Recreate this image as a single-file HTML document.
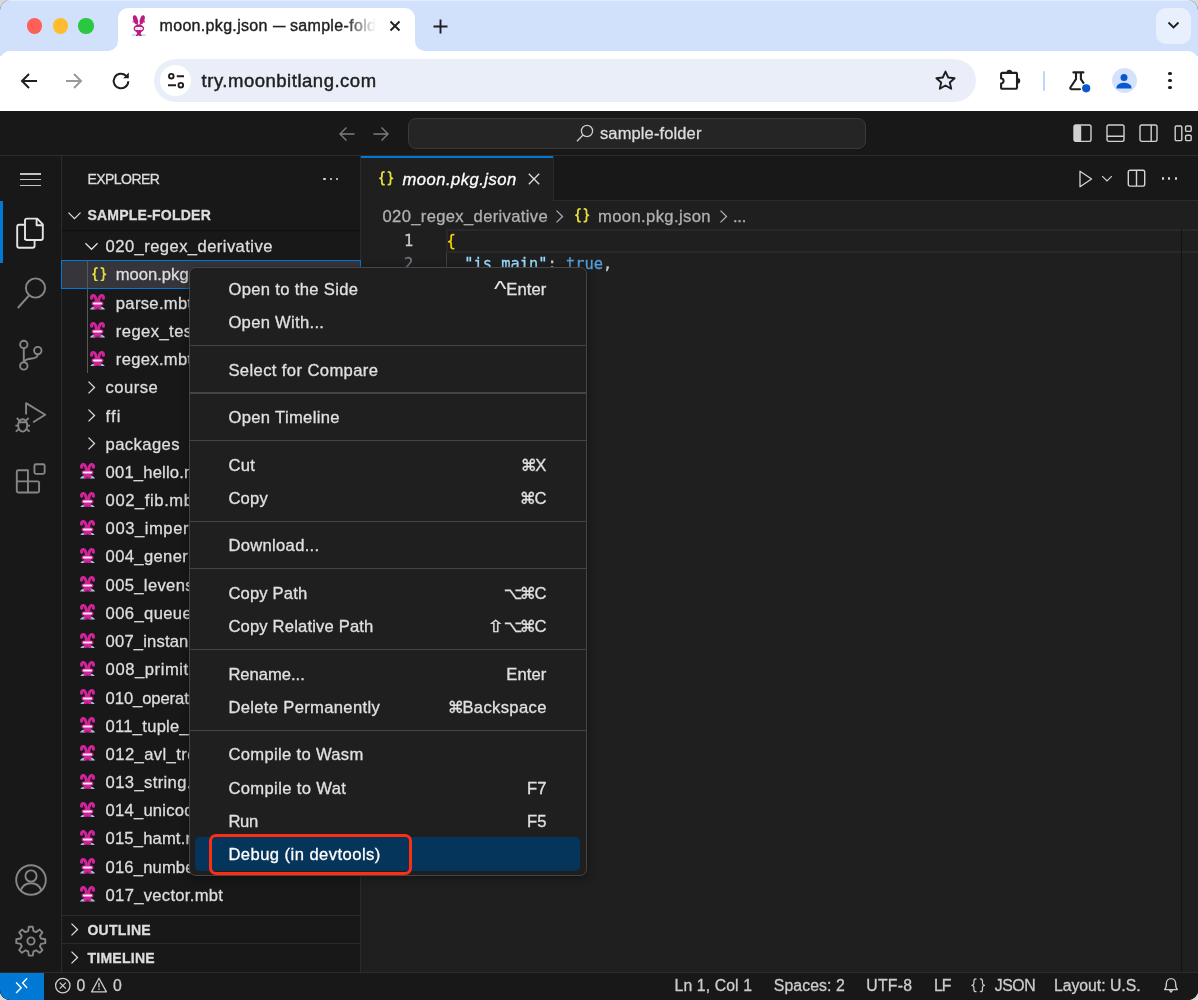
<!DOCTYPE html>
<html lang="en"><head><meta charset="utf-8"><title>moon.pkg.json — sample-folder</title>
<style>
html,body{margin:0;padding:0;}
body{width:1198px;height:1000px;overflow:hidden;background:#d9d9d9;font-family:"Liberation Sans",sans-serif;}
#win{will-change:transform;position:absolute;left:0;top:0;width:1198px;height:1000px;overflow:hidden;border-radius:10px;background:#181818;}
.b{position:absolute;display:block;}
.t{-webkit-text-stroke:0.3px;position:absolute;white-space:pre;line-height:20px;height:20px;font-family:"Liberation Sans",sans-serif;}
.sym{display:inline-block;font-family:"DejaVu Sans",sans-serif;font-size:16.2px;text-align:center;letter-spacing:0;line-height:20px;vertical-align:baseline;}
</style></head><body><div id="win">
<div class="b" style="left:0px;top:0px;width:1198px;height:64px;background:#d1e1fc;"></div>
<div class="b" style="left:0px;top:0px;width:1198px;height:1px;background:#e3edfe;"></div>
<div class="b" style="left:26.9px;top:18.4px;width:15.2px;height:15.2px;background:#fe5f57;border-radius:50%;"></div>
<div class="b" style="left:52.6px;top:18.4px;width:15.2px;height:15.2px;background:#febc2e;border-radius:50%;"></div>
<div class="b" style="left:78.4px;top:18.4px;width:15.2px;height:15.2px;background:#28c840;border-radius:50%;"></div>
<div class="b" style="left:118px;top:7.5px;width:297px;height:44px;background:#ffffff;border-radius:10px 10px 0 0;"></div>
<svg class="b" style="left:108px;top:41px;" width="10" height="10" viewBox="0 0 10 10"><path d="M10 0 V10 H0 A10 10 0 0 0 10 0Z" fill="#fff"/></svg>
<svg class="b" style="left:415px;top:41px;" width="10" height="10" viewBox="0 0 10 10"><path d="M0 0 V10 H10 A10 10 0 0 1 0 0Z" fill="#fff"/></svg>
<div class="b" style="left:0px;top:51px;width:1198px;height:60.6px;background:#ffffff;border-radius:10px 10px 0 0;"></div>
<div class="b" style="left:0px;top:56px;width:1198px;height:55.6px;background:#ffffff;"></div>
<svg class="b" style="left:131.9px;top:14.8px;" width="13.7" height="21.3" viewBox="0 0 13.7 21.3"><g fill="#bd1a82"><ellipse cx="3.500" cy="4.700" rx="2.250" ry="4.700" transform="rotate(-17 3.500 4.700)"/><ellipse cx="10.200" cy="4.700" rx="2.250" ry="4.700" transform="rotate(17 10.200 4.700)"/><path d="M2.600 7.500l4.250 3.600 4.250-3.600-.400-3-3.850 6-3.850-6z"/><path d="M1 5.200l-.500 2 1.500.400zM12.700 5.200l.500 2-1.500.400z"/><ellipse cx="6.850" cy="13.500" rx="5.300" ry="3.900"/><path d="M4.300 16.600h5.100l-1 2 1.500 2.300-2 .400-1.050-1.500-1.050 1.500-2-.400 1.500-2.300z"/></g><ellipse cx="2.300" cy="20.100" rx="2.500" ry="1.200" fill="#c3dcf3"/><ellipse cx="11.400" cy="20.100" rx="2.500" ry="1.200" fill="#c3dcf3"/><path d="M4.300 16.600h5.100l-1 2 1.500 2.300-2 .400-1.050-1.500-1.050 1.500-2-.400 1.500-2.300z" fill="#bd1a82"/><rect x="2.900" y="11.900" width="7.900" height="3.100" rx="1.550" fill="#fff"/><circle cx="5.300" cy="13.500" r=".700" fill="#e9a6d2"/><circle cx="8.400" cy="13.500" r=".700" fill="#e9a6d2"/></svg>
<span class="t" style="left:159.5px;top:15.50px;font-size:16px;color:#1f1f1f;-webkit-text-stroke:0.4px;width:218px;overflow:hidden;letter-spacing:0.326px;-webkit-mask-image:linear-gradient(90deg,#000 85%,transparent 99%);mask-image:linear-gradient(90deg,#000 85%,transparent 99%);">moon.pkg.json <span style="display:inline-block;width:12.6px;transform:scaleX(.78);transform-origin:0 50%;letter-spacing:0">—</span> sample-fold</span>
<svg class="b" style="left:388px;top:19px;" width="14" height="14" viewBox="0 0 14 14"><path d="M2.5 2.5l9 9M11.5 2.5l-9 9" stroke="#1f1f1f" stroke-width="1.9" fill="none"/></svg>
<svg class="b" style="left:432px;top:17.5px;" width="17" height="17" viewBox="0 0 17 17"><path d="M8.5 1.5v14M1.5 8.5h14" stroke="#1f1f1f" stroke-width="1.9" fill="none"/></svg>
<div class="b" style="left:1156px;top:7.5px;width:35px;height:36px;background:#e8f0fd;border-radius:10px;"></div>
<svg class="b" style="left:1166.5px;top:20px;" width="13" height="10" viewBox="0 0 13 10"><path d="M1.5 2.5l5 5 5-5" stroke="#1f1f1f" stroke-width="1.9" fill="none"/></svg>
<svg class="b" style="left:18px;top:70px;" width="22" height="22" viewBox="0 0 22 22"><path d="M19 11H4.5M11 4l-7 7 7 7" stroke="#1f1f1f" stroke-width="2" fill="none"/></svg>
<svg class="b" style="left:63px;top:70px;" width="22" height="22" viewBox="0 0 22 22"><path d="M3 11h14.5M11 4l7 7-7 7" stroke="#9a9a9a" stroke-width="2" fill="none"/></svg>
<svg class="b" style="left:109px;top:69px;" width="24" height="24" viewBox="0 0 24 24"><path d="M19.3 12.2a7.3 7.3 0 1 1-2.3-5.5" stroke="#1f1f1f" stroke-width="2" fill="none"/><path d="M19.8 3.6v5.6h-5.6z" fill="#1f1f1f"/></svg>
<div class="b" style="left:154px;top:59px;width:822px;height:43px;background:#e9eef9;border-radius:21.5px;"></div>
<div class="b" style="left:159.5px;top:64.7px;width:31.6px;height:31.6px;background:#ffffff;border-radius:50%;"></div>
<svg class="b" style="left:165.5px;top:71px;" width="20" height="20" viewBox="0 0 20 20"><g stroke="#1f1f1f" stroke-width="1.9" fill="none"><circle cx="5.3" cy="5.2" r="2.3"/><path d="M10.8 5.2H18"/><path d="M2 14.2h8"/><circle cx="14.8" cy="14.2" r="2.3"/></g></svg>
<span class="t" style="top:70.50px;font-size:18.5px;color:#1f1f1f;left:201.60px;letter-spacing:0.516px;-webkit-text-stroke:0.45px;">try.moonbitlang.com</span>
<svg class="b" style="left:933.5px;top:68.5px;" width="23" height="23" viewBox="0 0 23 23"><path d="M11.5 2.6l2.7 5.9 6.4.7-4.8 4.3 1.4 6.3-5.7-3.3-5.7 3.3 1.4-6.3L2.4 9.2l6.4-.7z" stroke="#1f1f1f" stroke-width="1.9" fill="none" stroke-linejoin="round"/></svg>
<svg class="b" style="left:999px;top:68px;" width="24" height="24" viewBox="0 0 24 24"><path d="M2.100 5.900a1 1 0 0 1 1-1H17a1 1 0 0 1 1 1v13.900a1 1 0 0 1-1 1H3.100a1 1 0 0 1-1-1v-4.300a2.500 2.500 0 0 0 0-5z" stroke="#1f1f1f" stroke-width="2.100" fill="none" stroke-linejoin="round"/><path d="M7.500 4.600a2.800 2.800 0 0 1 5.600 0zM18.400 10a2.850 2.850 0 0 1 0 5.700z" fill="#1f1f1f"/></svg>
<div class="b" style="left:1042.6px;top:70.6px;width:2.4px;height:20.2px;background:#c0d5fb;border-radius:1.200px;"></div>
<svg class="b" style="left:1066px;top:68px;" width="26" height="26" viewBox="0 0 26 26"><path d="M7.400 4.400h10M10 4.400v6.800L4.400 19.500a1.100 1.100 0 0 0 .900 1.700H14M14.900 4.400v6.800l2.700 4" stroke="#1f1f1f" stroke-width="2.100" fill="none" stroke-linejoin="round" stroke-linecap="round"/><circle cx="20.200" cy="20.300" r="5.200" fill="#fff"/><circle cx="20.200" cy="20.300" r="4.100" fill="#0b57d0"/></svg>
<div class="b" style="left:1111.8px;top:68px;width:25px;height:25px;background:#d3e3fd;border-radius:50%;"></div>
<svg class="b" style="left:1115.3px;top:71.5px;" width="18" height="18" viewBox="0 0 18 18"><circle cx="9" cy="5.6" r="3.5" fill="#0b57d0"/><path d="M1.6 15.2c0-3.3 4.9-4.5 7.4-4.5s7.4 1.2 7.4 4.5v1.2H1.6z" fill="#0b57d0"/></svg>
<div class="b" style="left:1168.4px;top:71.9px;width:3.4px;height:3.4px;background:#1f1f1f;border-radius:50%;"></div>
<div class="b" style="left:1168.4px;top:78.9px;width:3.4px;height:3.4px;background:#1f1f1f;border-radius:50%;"></div>
<div class="b" style="left:1168.4px;top:85.9px;width:3.4px;height:3.4px;background:#1f1f1f;border-radius:50%;"></div>
<div class="b" style="left:0px;top:111px;width:1198px;height:889px;background:#181818;"></div>
<div class="b" style="left:361px;top:156px;width:837px;height:816px;background:#1f1f1f;"></div>
<div class="b" style="left:0px;top:155px;width:1198px;height:1px;background:#2b2b2b;"></div>
<div class="b" style="left:60.5px;top:156px;width:1px;height:816px;background:#2b2b2b;"></div>
<div class="b" style="left:360px;top:156px;width:1px;height:816px;background:#2b2b2b;"></div>
<div class="b" style="left:361px;top:156px;width:837px;height:44.5px;background:#181818;"></div>
<div class="b" style="left:361px;top:200px;width:837px;height:1px;background:#2b2b2b;"></div>
<div class="b" style="left:361px;top:156px;width:191.5px;height:45px;background:#1f1f1f;"></div>
<div class="b" style="left:552.5px;top:156px;width:1px;height:44.5px;background:#2b2b2b;"></div>
<div class="b" style="left:361px;top:156px;width:191.5px;height:1.6px;background:#0078d4;"></div>
<div class="b" style="left:0px;top:972px;width:1198px;height:28px;background:#181818;"></div>
<div class="b" style="left:0px;top:971.8px;width:1198px;height:1.3px;background:#2b2b2b;"></div>
<div class="b" style="left:0px;top:973.1px;width:43.6px;height:27px;background:#0078d4;"></div>
<svg class="b" style="left:337px;top:124px;" width="20" height="20" viewBox="0 0 20 20"><path d="M17.5 10H3M9.5 3.5L3 10l6.5 6.5" stroke="#7d7d7d" stroke-width="1.4" fill="none"/></svg>
<svg class="b" style="left:370.5px;top:124px;" width="20" height="20" viewBox="0 0 20 20"><path d="M2.5 10H17M10.5 3.5L17 10l-6.5 6.5" stroke="#7d7d7d" stroke-width="1.4" fill="none"/></svg>
<div class="b" style="left:408px;top:118px;width:457.5px;height:30.8px;background:#252526;border-radius:8px;border:1px solid #3a3a3a;box-sizing:border-box;"></div>
<svg class="b" style="left:575px;top:123px;" width="20" height="20" viewBox="0 0 20 20"><circle cx="12" cy="8" r="5.6" stroke="#cccccc" stroke-width="1.3" fill="none"/><path d="M8 12L2 18.3" stroke="#cccccc" stroke-width="1.3"/></svg>
<span class="t" style="top:123.00px;font-size:16.5px;color:#dcdcdc;left:600.00px;letter-spacing:0.118px;">sample-folder</span>
<svg class="b" style="left:1072.5px;top:124px;" width="19" height="19" viewBox="0 0 19 19"><rect x="1" y="1" width="17" height="16.4" rx="1.8" stroke="#d0d0d0" stroke-width="1.4" fill="none"/><rect x="1" y="1" width="7.2" height="16.4" rx="1.5" fill="#d0d0d0"/></svg>
<svg class="b" style="left:1106px;top:124px;" width="19" height="19" viewBox="0 0 19 19"><rect x="1" y="1" width="17" height="16.4" rx="1.8" stroke="#d0d0d0" stroke-width="1.4" fill="none"/><path d="M1 12.3h17" stroke="#d0d0d0" stroke-width="1.4"/></svg>
<svg class="b" style="left:1139.3px;top:124px;" width="19" height="19" viewBox="0 0 19 19"><rect x="1" y="1" width="17" height="16.4" rx="1.8" stroke="#d0d0d0" stroke-width="1.4" fill="none"/><path d="M12.200 1v16.400" stroke="#d0d0d0" stroke-width="1.400"/></svg>
<svg class="b" style="left:1173.5px;top:124px;" width="19" height="19" viewBox="0 0 19 19"><rect x="1.2" y="2" width="6.6" height="14.6" rx="1.2" stroke="#d0d0d0" stroke-width="1.4" fill="none"/><rect x="11.6" y="2" width="5.6" height="5.4" rx="1.2" stroke="#d0d0d0" stroke-width="1.4" fill="none"/><rect x="11.6" y="11.2" width="5.6" height="5.4" rx="1.2" stroke="#d0d0d0" stroke-width="1.4" fill="none"/></svg>
<div class="b" style="left:0px;top:201px;width:2.8px;height:61.5px;background:#0078d4;"></div>
<div class="b" style="left:20px;top:173.35px;width:21.3px;height:1.3px;background:#c4c4c4;"></div>
<div class="b" style="left:20px;top:178.95px;width:21.3px;height:1.3px;background:#c4c4c4;"></div>
<div class="b" style="left:20px;top:184.54999999999998px;width:21.3px;height:1.3px;background:#c4c4c4;"></div>
<svg class="b" style="left:14px;top:214px;" width="34" height="37" viewBox="0 0 34 37"><g stroke="#e4e4e4" stroke-width="1.9" fill="none" stroke-linejoin="round"><path d="M11 26V6.6a2 2 0 0 1 2-2h10.2l5.6 5.8V24a2 2 0 0 1-2 2H13a2 2 0 0 1-2-2"/><path d="M22.6 4.8v6.4h6"/><path d="M10.8 10.8H5.2a2 2 0 0 0-2 2v19a2 2 0 0 0 2 2h13.4a2 2 0 0 0 2-2v-5.6"/></g></svg>
<svg class="b" style="left:14px;top:274px;" width="36" height="40" viewBox="0 0 36 40"><circle cx="21.5" cy="14" r="9.6" stroke="#868686" stroke-width="1.9" fill="none"/><path d="M15 21.5L3.8 34" stroke="#868686" stroke-width="1.9"/></svg>
<svg class="b" style="left:14px;top:336px;" width="36" height="38" viewBox="0 0 36 38"><g stroke="#868686" stroke-width="1.9" fill="none"><circle cx="9.8" cy="8.5" r="3.7"/><circle cx="23.8" cy="14.6" r="3.7"/><circle cx="9.8" cy="29.9" r="3.7"/><path d="M9.800 12.200v14"/><path d="M23.800 18.300c0 3.200-2.400 3.900-5.800 4.200-3.600.300-7.400.600-8.200 3.700"/></g></svg>
<svg class="b" style="left:13px;top:399px;" width="36" height="36" viewBox="0 0 36 36"><g stroke="#868686" stroke-width="1.9" fill="none" stroke-linejoin="round"><path d="M13.100 15.600V4.100L32.200 15.700 20.100 23.300"/><ellipse cx="9.700" cy="26.400" rx="4.500" ry="6.200"/><path d="M5.600 23.300h8.200M5.200 26.600H2.400M5.600 30.200l-2.800 2.400M14.200 26.600h2.800M13.800 30.200l2.800 2.400M6.400 21.600l-2.600-2.600M13 21.600l2.600-2.600"/></g></svg>
<svg class="b" style="left:13px;top:461px;" width="36" height="36" viewBox="0 0 36 36"><g stroke="#868686" stroke-width="1.9" fill="none" stroke-linejoin="round"><path d="M14.950 9.200H5.300a1.500 1.500 0 0 0-1.500 1.500V30a1.500 1.500 0 0 0 1.500 1.500h19.300a1.500 1.500 0 0 0 1.500-1.500v-8.150a1.500 1.500 0 0 0-1.500-1.500H14.950zM14.950 20.350V31.500M3.800 20.350h11.150"/><rect x="21.450" y="3.250" width="10.200" height="9.600" rx="1.500"/></g></svg>
<svg class="b" style="left:14px;top:862.5px;" width="34" height="34" viewBox="0 0 34 34"><g stroke="#868686" stroke-width="1.9" fill="none"><circle cx="17" cy="17" r="14.8"/><circle cx="17" cy="13" r="5.6"/><path d="M6.8 27.6c1.6-5.4 5.8-7.4 10.2-7.4s8.600 2 10.2 7.400"/></g></svg>
<svg class="b" style="left:13px;top:923px;" width="36" height="36" viewBox="0 0 36 36"><g stroke="#868686" stroke-width="1.9" fill="none" stroke-linejoin="round"><path d="M32.27 16.26 L32.27 20.14 L27.95 20.89 L26.88 23.47 L29.41 27.06 L26.66 29.81 L23.07 27.28 L20.49 28.35 L19.74 32.67 L15.86 32.67 L15.11 28.35 L12.53 27.28 L8.94 29.81 L6.19 27.06 L8.72 23.47 L7.65 20.89 L3.33 20.14 L3.33 16.26 L7.65 15.51 L8.72 12.93 L6.19 9.34 L8.94 6.59 L12.53 9.12 L15.11 8.05 L15.86 3.73 L19.74 3.73 L20.49 8.05 L23.07 9.12 L26.66 6.59 L29.41 9.34 L26.88 12.93 L27.95 15.51Z"/><circle cx="18" cy="18" r="3.6"/></g></svg>
<svg class="b" style="left:13px;top:977px;" width="18" height="18" viewBox="0 0 18 18"><path d="M3.100 5.500l5.100 5.300-5.100 5.300M14.100 1.300l-4.500 4.800 4.500 4.800" stroke="#fff" stroke-width="1.4" fill="none"/></svg>
<svg class="b" style="left:54px;top:976.9px;" width="18" height="18" viewBox="0 0 18 18"><circle cx="8.8" cy="8.6" r="7.2" stroke="#ccc" stroke-width="1.3" fill="none"/><path d="M5.8 5.6l6 6M11.8 5.6l-6 6" stroke="#ccc" stroke-width="1.3"/></svg>
<span class="t" style="top:975.50px;font-size:15.8px;color:#cccccc;left:76.50px;letter-spacing:-0.297px;">0</span>
<svg class="b" style="left:90.4px;top:976.3px;" width="18" height="18" viewBox="0 0 18 18"><path d="M9 2.200L16.400 15.900H1.600z" stroke="#ccc" stroke-width="1.3" fill="none" stroke-linejoin="round"/><path d="M9 6.8v4.6M9 12.6v1.4" stroke="#ccc" stroke-width="1.3"/></svg>
<span class="t" style="top:975.50px;font-size:15.8px;color:#cccccc;left:113.00px;letter-spacing:-0.297px;">0</span>
<span class="t" style="top:975.50px;font-size:15.8px;color:#cccccc;left:674.60px;letter-spacing:0.099px;">Ln 1, Col 1</span>
<span class="t" style="top:975.50px;font-size:15.8px;color:#cccccc;left:773.80px;letter-spacing:0.082px;">Spaces: 2</span>
<span class="t" style="top:975.50px;font-size:15.8px;color:#cccccc;left:866.20px;letter-spacing:0.287px;">UTF-8</span>
<span class="t" style="top:975.50px;font-size:15.8px;color:#cccccc;left:934.00px;letter-spacing:-0.919px;">LF</span>
<svg class="b" style="left:970.5px;top:978.4px;" width="14.4" height="14.6" viewBox="0 0 14.4 14.6"><g stroke="#cccccc" stroke-width="1.2" fill="none" stroke-linecap="round" stroke-linejoin="round"><path d="M5 .900C3.300.900 2.900 1.800 2.900 3.200V5.300C2.900 6.600 2.300 7.200.900 7.300 2.300 7.400 2.900 8 2.900 9.300v2.100c0 1.400.400 2.300 2.100 2.300"/><path d="M9.400.900c1.700 0 2.100.900 2.100 2.300v2.100c0 1.300.600 1.900 2 2-1.400.100-2 .700-2 2v2.100c0 1.400-.400 2.300-2.100 2.300"/></g></svg>
<span class="t" style="top:975.50px;font-size:15.8px;color:#cccccc;left:994.70px;letter-spacing:-0.385px;">JSON</span>
<span class="t" style="top:975.50px;font-size:15.8px;color:#cccccc;left:1054.00px;letter-spacing:-0.036px;">Layout: U.S.</span>
<svg class="b" style="left:1162px;top:975.8px;" width="18" height="19" viewBox="0 0 18 19"><path d="M2.6 13.6h12.8c-1.600-1.6-1.800-3-1.800-6.400a4.600 4.600 0 0 0-9.200 0c0 3.400-.2 4.800-1.800 6.400zM7.400 14l1.600 2.200 1.600-2.200" stroke="#ccc" stroke-width="1.3" fill="none" stroke-linejoin="round"/></svg>
<span class="t" style="top:169.00px;font-size:14px;color:#dddddd;left:87.40px;letter-spacing:-0.531px;">EXPLORER</span>
<div class="b" style="left:323.4px;top:177.6px;width:2.2px;height:2.2px;background:#dddddd;border-radius:50%;"></div>
<div class="b" style="left:329.7px;top:177.6px;width:2.2px;height:2.2px;background:#dddddd;border-radius:50%;"></div>
<div class="b" style="left:336.0px;top:177.6px;width:2.2px;height:2.2px;background:#dddddd;border-radius:50%;"></div>
<svg class="b" style="left:67px;top:209px;" width="15" height="14" viewBox="0 0 15 14"><path d="M1.5 3.6l6 6 6-6" stroke="#dddddd" stroke-width="1.3" fill="none"/></svg>
<span class="t" style="top:205.00px;font-size:14px;color:#dddddd;left:87.40px;letter-spacing:0.234px;font-weight:700;">SAMPLE-FOLDER</span>
<div class="b" style="left:62px;top:229.5px;width:298px;height:2.5px;background:linear-gradient(#0c0c0c,rgba(24,24,24,0));"></div>
<div class="b" style="left:61.4px;top:259.8px;width:299.2px;height:29.099999999999998px;background:#35353b;box-sizing:border-box;border:1.600px solid #0078d4;"></div>
<div class="b" style="left:87.2px;top:260.2px;width:1.3px;height:112.8px;background:#585858;"></div>
<svg class="b" style="left:84px;top:242.0px;" width="15" height="9" viewBox="0 0 15 9"><path d="M1.400 1.200l6.100 6.100 6.100-6.100" stroke="#dddddd" stroke-width="1.3" fill="none"/></svg>
<span class="t" style="top:236.50px;font-size:16.6px;color:#dddddd;left:105.60px;letter-spacing:0.426px;max-width:249px;overflow:hidden;">020_regex_derivative</span>
<svg class="b" style="left:92.3px;top:266.8px;" width="14.4" height="14.6" viewBox="0 0 14.4 14.6"><g stroke="#e2dc3c" stroke-width="1.8" fill="none" stroke-linecap="round" stroke-linejoin="round"><path d="M5 .900C3.300.900 2.900 1.800 2.900 3.200V5.300C2.900 6.600 2.300 7.200.900 7.300 2.300 7.400 2.900 8 2.900 9.300v2.100c0 1.400.400 2.300 2.100 2.300"/><path d="M9.400.900c1.700 0 2.100.900 2.100 2.300v2.100c0 1.300.600 1.900 2 2-1.400.100-2 .700-2 2v2.100c0 1.400-.400 2.300-2.100 2.300"/></g></svg>
<span class="t" style="top:264.50px;font-size:16.6px;color:#dddddd;left:115.80px;letter-spacing:-0.009px;max-width:239px;overflow:hidden;">moon.pkg.json</span>
<svg class="b" style="left:90px;top:294.09999999999997px;" width="15" height="15.6" viewBox="0 0 15 15.6"><g stroke="#d12399" stroke-width="3.1" fill="none" stroke-linecap="round"><path d="M6.500 8C6.100 4.600 5.200 1.700 3.500 1.500 2 1.400 1.300 2.900 1.600 4.300"/><path d="M8.500 8C8.900 4.600 9.800 1.700 11.500 1.500 13 1.400 13.700 2.900 13.400 4.300"/></g><path d="M0 15.600c.800-1.900 2.500-3 4.600-3.100l.600 3.100zM15 15.600c-.800-1.900-2.500-3-4.600-3.100l-.600 3.100z" fill="#a9c7dc"/><path d="M3.300 7.400h8.400c1.100 0 1.800.900 1.800 2.100s-.700 2.100-1.800 2.100h-.900l.700 3.800H3.500l.700-3.800h-.900c-1.100 0-1.800-.900-1.800-2.100s.700-2.100 1.800-2.100z" fill="#d12399"/><rect x="2.900" y="8.500" width="9.200" height="2.100" rx="1.050" fill="#fdeaf6"/><path d="M5.200 15.400l2.300-2 2.300 2z" fill="#181818" opacity=".35"/></svg>
<span class="t" style="top:293.50px;font-size:16.6px;color:#dddddd;left:115.80px;letter-spacing:0.323px;max-width:239px;overflow:hidden;">parse.mbt</span>
<svg class="b" style="left:90px;top:322.3px;" width="15" height="15.6" viewBox="0 0 15 15.6"><g stroke="#d12399" stroke-width="3.1" fill="none" stroke-linecap="round"><path d="M6.500 8C6.100 4.600 5.200 1.700 3.500 1.500 2 1.400 1.300 2.900 1.600 4.300"/><path d="M8.500 8C8.900 4.600 9.800 1.700 11.500 1.500 13 1.400 13.700 2.900 13.400 4.300"/></g><path d="M0 15.600c.800-1.900 2.500-3 4.600-3.100l.600 3.100zM15 15.600c-.800-1.900-2.500-3-4.600-3.100l-.600 3.100z" fill="#a9c7dc"/><path d="M3.300 7.400h8.400c1.100 0 1.800.900 1.800 2.100s-.700 2.100-1.800 2.100h-.900l.700 3.800H3.500l.700-3.800h-.900c-1.100 0-1.800-.900-1.800-2.100s.700-2.100 1.800-2.100z" fill="#d12399"/><rect x="2.900" y="8.500" width="9.200" height="2.100" rx="1.050" fill="#fdeaf6"/><path d="M5.200 15.400l2.300-2 2.300 2z" fill="#181818" opacity=".35"/></svg>
<span class="t" style="top:321.50px;font-size:16.6px;color:#dddddd;left:115.80px;letter-spacing:0.428px;max-width:239px;overflow:hidden;">regex_test.mbt</span>
<svg class="b" style="left:90px;top:350.5px;" width="15" height="15.6" viewBox="0 0 15 15.6"><g stroke="#d12399" stroke-width="3.1" fill="none" stroke-linecap="round"><path d="M6.500 8C6.100 4.600 5.200 1.700 3.500 1.500 2 1.400 1.300 2.900 1.600 4.300"/><path d="M8.500 8C8.900 4.600 9.800 1.700 11.500 1.500 13 1.400 13.700 2.900 13.400 4.300"/></g><path d="M0 15.600c.800-1.900 2.500-3 4.600-3.100l.600 3.100zM15 15.600c-.800-1.900-2.500-3-4.600-3.100l-.600 3.100z" fill="#a9c7dc"/><path d="M3.300 7.400h8.400c1.100 0 1.800.900 1.800 2.100s-.700 2.100-1.800 2.100h-.900l.700 3.800H3.500l.700-3.800h-.900c-1.100 0-1.800-.900-1.800-2.100s.700-2.100 1.800-2.100z" fill="#d12399"/><rect x="2.900" y="8.500" width="9.200" height="2.100" rx="1.050" fill="#fdeaf6"/><path d="M5.200 15.400l2.300-2 2.300 2z" fill="#181818" opacity=".35"/></svg>
<span class="t" style="top:349.50px;font-size:16.6px;color:#dddddd;left:115.80px;letter-spacing:0.323px;max-width:239px;overflow:hidden;">regex.mbt</span>
<svg class="b" style="left:86.7px;top:380.0px;" width="9" height="15" viewBox="0 0 9 15"><path d="M1.500 1.600l6 5.900-6 5.900" stroke="#dddddd" stroke-width="1.3" fill="none"/></svg>
<span class="t" style="top:377.50px;font-size:16.6px;color:#dddddd;left:105.60px;letter-spacing:0.448px;max-width:249px;overflow:hidden;">course</span>
<svg class="b" style="left:86.7px;top:408.2px;" width="9" height="15" viewBox="0 0 9 15"><path d="M1.500 1.600l6 5.900-6 5.900" stroke="#dddddd" stroke-width="1.3" fill="none"/></svg>
<span class="t" style="top:406.50px;font-size:16.6px;color:#dddddd;left:105.60px;letter-spacing:1.097px;max-width:249px;overflow:hidden;">ffi</span>
<svg class="b" style="left:86.7px;top:436.4px;" width="9" height="15" viewBox="0 0 9 15"><path d="M1.500 1.600l6 5.900-6 5.900" stroke="#dddddd" stroke-width="1.3" fill="none"/></svg>
<span class="t" style="top:434.50px;font-size:16.6px;color:#dddddd;left:105.60px;letter-spacing:0.407px;max-width:249px;overflow:hidden;">packages</span>
<svg class="b" style="left:79.8px;top:463.3px;" width="15" height="15.6" viewBox="0 0 15 15.6"><g stroke="#d12399" stroke-width="3.1" fill="none" stroke-linecap="round"><path d="M6.500 8C6.100 4.600 5.200 1.700 3.500 1.500 2 1.400 1.300 2.900 1.600 4.300"/><path d="M8.500 8C8.900 4.600 9.800 1.700 11.500 1.500 13 1.400 13.700 2.900 13.400 4.300"/></g><path d="M0 15.600c.800-1.900 2.500-3 4.600-3.100l.600 3.100zM15 15.600c-.800-1.900-2.500-3-4.600-3.100l-.600 3.100z" fill="#a9c7dc"/><path d="M3.300 7.400h8.400c1.100 0 1.800.900 1.800 2.100s-.700 2.100-1.800 2.100h-.900l.700 3.800H3.500l.700-3.800h-.900c-1.100 0-1.800-.900-1.800-2.100s.700-2.100 1.800-2.100z" fill="#d12399"/><rect x="2.900" y="8.500" width="9.200" height="2.100" rx="1.050" fill="#fdeaf6"/><path d="M5.200 15.400l2.300-2 2.300 2z" fill="#181818" opacity=".35"/></svg>
<span class="t" style="top:462.50px;font-size:16.6px;color:#dddddd;left:105.60px;letter-spacing:0.179px;max-width:249px;overflow:hidden;">001_hello.mbt</span>
<svg class="b" style="left:79.8px;top:491.49999999999994px;" width="15" height="15.6" viewBox="0 0 15 15.6"><g stroke="#d12399" stroke-width="3.1" fill="none" stroke-linecap="round"><path d="M6.500 8C6.100 4.600 5.200 1.700 3.500 1.500 2 1.400 1.300 2.900 1.600 4.300"/><path d="M8.500 8C8.900 4.600 9.800 1.700 11.500 1.500 13 1.400 13.700 2.900 13.400 4.300"/></g><path d="M0 15.600c.800-1.900 2.500-3 4.600-3.100l.600 3.100zM15 15.600c-.800-1.900-2.500-3-4.600-3.100l-.600 3.100z" fill="#a9c7dc"/><path d="M3.300 7.400h8.400c1.100 0 1.800.900 1.800 2.100s-.700 2.100-1.800 2.100h-.900l.700 3.800H3.500l.700-3.800h-.900c-1.100 0-1.800-.900-1.800-2.100s.700-2.100 1.800-2.100z" fill="#d12399"/><rect x="2.900" y="8.500" width="9.200" height="2.100" rx="1.050" fill="#fdeaf6"/><path d="M5.200 15.400l2.300-2 2.300 2z" fill="#181818" opacity=".35"/></svg>
<span class="t" style="top:490.50px;font-size:16.6px;color:#dddddd;left:105.60px;letter-spacing:0.587px;max-width:249px;overflow:hidden;">002_fib.mbt</span>
<svg class="b" style="left:79.8px;top:519.7px;" width="15" height="15.6" viewBox="0 0 15 15.6"><g stroke="#d12399" stroke-width="3.1" fill="none" stroke-linecap="round"><path d="M6.500 8C6.100 4.600 5.200 1.700 3.500 1.500 2 1.400 1.300 2.900 1.600 4.300"/><path d="M8.500 8C8.900 4.600 9.800 1.700 11.500 1.500 13 1.400 13.700 2.900 13.400 4.300"/></g><path d="M0 15.600c.800-1.900 2.500-3 4.600-3.100l.600 3.100zM15 15.600c-.800-1.900-2.500-3-4.600-3.100l-.600 3.100z" fill="#a9c7dc"/><path d="M3.300 7.400h8.400c1.100 0 1.800.900 1.800 2.100s-.700 2.100-1.800 2.100h-.900l.700 3.800H3.500l.700-3.800h-.900c-1.100 0-1.800-.900-1.800-2.100s.700-2.100 1.800-2.100z" fill="#d12399"/><rect x="2.900" y="8.500" width="9.200" height="2.100" rx="1.050" fill="#fdeaf6"/><path d="M5.200 15.400l2.300-2 2.300 2z" fill="#181818" opacity=".35"/></svg>
<span class="t" style="top:518.50px;font-size:16.6px;color:#dddddd;left:105.60px;letter-spacing:0.555px;max-width:249px;overflow:hidden;">003_imperative.mbt</span>
<svg class="b" style="left:79.8px;top:547.9000000000001px;" width="15" height="15.6" viewBox="0 0 15 15.6"><g stroke="#d12399" stroke-width="3.1" fill="none" stroke-linecap="round"><path d="M6.500 8C6.100 4.600 5.200 1.700 3.500 1.500 2 1.400 1.300 2.900 1.600 4.300"/><path d="M8.500 8C8.900 4.600 9.800 1.700 11.500 1.500 13 1.400 13.700 2.900 13.400 4.300"/></g><path d="M0 15.600c.800-1.900 2.500-3 4.600-3.100l.600 3.100zM15 15.600c-.800-1.900-2.500-3-4.600-3.100l-.600 3.100z" fill="#a9c7dc"/><path d="M3.300 7.400h8.400c1.100 0 1.800.900 1.800 2.100s-.700 2.100-1.800 2.100h-.900l.700 3.800H3.500l.700-3.800h-.900c-1.100 0-1.800-.900-1.800-2.100s.700-2.100 1.800-2.100z" fill="#d12399"/><rect x="2.900" y="8.500" width="9.200" height="2.100" rx="1.050" fill="#fdeaf6"/><path d="M5.200 15.400l2.300-2 2.300 2z" fill="#181818" opacity=".35"/></svg>
<span class="t" style="top:546.50px;font-size:16.6px;color:#dddddd;left:105.60px;letter-spacing:0.357px;max-width:249px;overflow:hidden;">004_generics.mbt</span>
<svg class="b" style="left:79.8px;top:576.1px;" width="15" height="15.6" viewBox="0 0 15 15.6"><g stroke="#d12399" stroke-width="3.1" fill="none" stroke-linecap="round"><path d="M6.500 8C6.100 4.600 5.200 1.700 3.500 1.500 2 1.400 1.300 2.900 1.600 4.300"/><path d="M8.500 8C8.900 4.600 9.800 1.700 11.500 1.500 13 1.400 13.700 2.900 13.400 4.300"/></g><path d="M0 15.600c.800-1.900 2.500-3 4.600-3.100l.600 3.100zM15 15.600c-.800-1.900-2.500-3-4.600-3.100l-.600 3.100z" fill="#a9c7dc"/><path d="M3.300 7.400h8.400c1.100 0 1.800.900 1.800 2.100s-.700 2.100-1.800 2.100h-.900l.700 3.800H3.500l.700-3.800h-.900c-1.100 0-1.800-.900-1.800-2.100s.700-2.100 1.800-2.100z" fill="#d12399"/><rect x="2.900" y="8.500" width="9.200" height="2.100" rx="1.050" fill="#fdeaf6"/><path d="M5.200 15.400l2.300-2 2.300 2z" fill="#181818" opacity=".35"/></svg>
<span class="t" style="top:575.50px;font-size:16.6px;color:#dddddd;left:105.60px;letter-spacing:0.337px;max-width:249px;overflow:hidden;">005_levenshtein.mbt</span>
<svg class="b" style="left:79.8px;top:604.3px;" width="15" height="15.6" viewBox="0 0 15 15.6"><g stroke="#d12399" stroke-width="3.1" fill="none" stroke-linecap="round"><path d="M6.500 8C6.100 4.600 5.200 1.700 3.500 1.500 2 1.400 1.300 2.900 1.600 4.300"/><path d="M8.500 8C8.900 4.600 9.800 1.700 11.500 1.500 13 1.400 13.700 2.900 13.400 4.300"/></g><path d="M0 15.600c.800-1.900 2.500-3 4.600-3.100l.600 3.100zM15 15.600c-.800-1.900-2.500-3-4.600-3.100l-.600 3.100z" fill="#a9c7dc"/><path d="M3.300 7.400h8.400c1.100 0 1.800.900 1.800 2.100s-.700 2.100-1.800 2.100h-.900l.700 3.800H3.500l.700-3.800h-.900c-1.100 0-1.800-.900-1.800-2.100s.700-2.100 1.800-2.100z" fill="#d12399"/><rect x="2.900" y="8.500" width="9.200" height="2.100" rx="1.050" fill="#fdeaf6"/><path d="M5.200 15.400l2.300-2 2.300 2z" fill="#181818" opacity=".35"/></svg>
<span class="t" style="top:603.50px;font-size:16.6px;color:#dddddd;left:105.60px;letter-spacing:0.379px;max-width:249px;overflow:hidden;">006_queue.mbt</span>
<svg class="b" style="left:79.8px;top:632.5px;" width="15" height="15.6" viewBox="0 0 15 15.6"><g stroke="#d12399" stroke-width="3.1" fill="none" stroke-linecap="round"><path d="M6.500 8C6.100 4.600 5.200 1.700 3.500 1.500 2 1.400 1.300 2.900 1.600 4.300"/><path d="M8.500 8C8.900 4.600 9.800 1.700 11.500 1.500 13 1.400 13.700 2.900 13.400 4.300"/></g><path d="M0 15.600c.800-1.900 2.500-3 4.600-3.100l.600 3.100zM15 15.600c-.800-1.900-2.500-3-4.600-3.100l-.600 3.100z" fill="#a9c7dc"/><path d="M3.300 7.400h8.400c1.100 0 1.800.900 1.800 2.100s-.700 2.100-1.800 2.100h-.900l.700 3.800H3.500l.700-3.800h-.900c-1.100 0-1.800-.900-1.800-2.100s.700-2.100 1.800-2.100z" fill="#d12399"/><rect x="2.900" y="8.500" width="9.200" height="2.100" rx="1.050" fill="#fdeaf6"/><path d="M5.200 15.400l2.300-2 2.300 2z" fill="#181818" opacity=".35"/></svg>
<span class="t" style="top:631.50px;font-size:16.6px;color:#dddddd;left:105.60px;letter-spacing:0.171px;max-width:249px;overflow:hidden;">007_instance.mbt</span>
<svg class="b" style="left:79.8px;top:660.7px;" width="15" height="15.6" viewBox="0 0 15 15.6"><g stroke="#d12399" stroke-width="3.1" fill="none" stroke-linecap="round"><path d="M6.500 8C6.100 4.600 5.200 1.700 3.500 1.500 2 1.400 1.300 2.900 1.600 4.300"/><path d="M8.500 8C8.900 4.600 9.800 1.700 11.500 1.500 13 1.400 13.700 2.900 13.400 4.300"/></g><path d="M0 15.600c.800-1.900 2.500-3 4.600-3.100l.600 3.100zM15 15.600c-.800-1.900-2.500-3-4.600-3.100l-.600 3.100z" fill="#a9c7dc"/><path d="M3.300 7.400h8.400c1.100 0 1.800.900 1.800 2.100s-.700 2.100-1.800 2.100h-.900l.700 3.800H3.500l.700-3.800h-.900c-1.100 0-1.800-.900-1.800-2.100s.700-2.100 1.800-2.100z" fill="#d12399"/><rect x="2.900" y="8.500" width="9.200" height="2.100" rx="1.050" fill="#fdeaf6"/><path d="M5.200 15.400l2.300-2 2.300 2z" fill="#181818" opacity=".35"/></svg>
<span class="t" style="top:659.50px;font-size:16.6px;color:#dddddd;left:105.60px;letter-spacing:0.568px;max-width:249px;overflow:hidden;">008_primitive.mbt</span>
<svg class="b" style="left:79.8px;top:688.9000000000001px;" width="15" height="15.6" viewBox="0 0 15 15.6"><g stroke="#d12399" stroke-width="3.1" fill="none" stroke-linecap="round"><path d="M6.500 8C6.100 4.600 5.200 1.700 3.500 1.500 2 1.400 1.300 2.900 1.600 4.300"/><path d="M8.500 8C8.900 4.600 9.800 1.700 11.500 1.500 13 1.400 13.700 2.900 13.400 4.300"/></g><path d="M0 15.600c.800-1.900 2.500-3 4.600-3.100l.600 3.100zM15 15.600c-.800-1.900-2.500-3-4.600-3.100l-.600 3.100z" fill="#a9c7dc"/><path d="M3.300 7.400h8.400c1.100 0 1.800.900 1.800 2.100s-.700 2.100-1.800 2.100h-.900l.700 3.800H3.500l.700-3.800h-.900c-1.100 0-1.800-.900-1.800-2.100s.700-2.100 1.800-2.100z" fill="#d12399"/><rect x="2.900" y="8.500" width="9.200" height="2.100" rx="1.050" fill="#fdeaf6"/><path d="M5.200 15.400l2.300-2 2.300 2z" fill="#181818" opacity=".35"/></svg>
<span class="t" style="top:688.50px;font-size:16.6px;color:#dddddd;left:105.60px;letter-spacing:-0.088px;max-width:249px;overflow:hidden;">010_operator.mbt</span>
<svg class="b" style="left:79.8px;top:717.1px;" width="15" height="15.6" viewBox="0 0 15 15.6"><g stroke="#d12399" stroke-width="3.1" fill="none" stroke-linecap="round"><path d="M6.500 8C6.100 4.600 5.200 1.700 3.500 1.500 2 1.400 1.300 2.900 1.600 4.300"/><path d="M8.500 8C8.900 4.600 9.800 1.700 11.500 1.500 13 1.400 13.700 2.900 13.400 4.300"/></g><path d="M0 15.600c.800-1.900 2.500-3 4.600-3.100l.600 3.100zM15 15.600c-.800-1.900-2.500-3-4.600-3.100l-.600 3.100z" fill="#a9c7dc"/><path d="M3.300 7.400h8.400c1.100 0 1.800.900 1.800 2.100s-.700 2.100-1.800 2.100h-.900l.700 3.800H3.500l.700-3.800h-.900c-1.100 0-1.800-.900-1.800-2.100s.700-2.100 1.800-2.100z" fill="#d12399"/><rect x="2.900" y="8.500" width="9.200" height="2.100" rx="1.050" fill="#fdeaf6"/><path d="M5.200 15.400l2.300-2 2.300 2z" fill="#181818" opacity=".35"/></svg>
<span class="t" style="top:716.50px;font-size:16.6px;color:#dddddd;left:105.60px;letter-spacing:0.252px;max-width:249px;overflow:hidden;">011_tuple_accessor.mbt</span>
<svg class="b" style="left:79.8px;top:745.3px;" width="15" height="15.6" viewBox="0 0 15 15.6"><g stroke="#d12399" stroke-width="3.1" fill="none" stroke-linecap="round"><path d="M6.500 8C6.100 4.600 5.200 1.700 3.500 1.500 2 1.400 1.300 2.900 1.600 4.300"/><path d="M8.500 8C8.900 4.600 9.800 1.700 11.500 1.500 13 1.400 13.700 2.900 13.400 4.300"/></g><path d="M0 15.600c.800-1.900 2.500-3 4.600-3.100l.600 3.100zM15 15.600c-.800-1.900-2.500-3-4.600-3.100l-.600 3.100z" fill="#a9c7dc"/><path d="M3.300 7.400h8.400c1.100 0 1.800.900 1.800 2.100s-.700 2.100-1.800 2.100h-.900l.700 3.800H3.500l.700-3.800h-.900c-1.100 0-1.800-.900-1.800-2.100s.700-2.100 1.800-2.100z" fill="#d12399"/><rect x="2.900" y="8.500" width="9.200" height="2.100" rx="1.050" fill="#fdeaf6"/><path d="M5.200 15.400l2.300-2 2.300 2z" fill="#181818" opacity=".35"/></svg>
<span class="t" style="top:744.50px;font-size:16.6px;color:#dddddd;left:105.60px;letter-spacing:0.414px;max-width:249px;overflow:hidden;">012_avl_tree.mbt</span>
<svg class="b" style="left:79.8px;top:773.5px;" width="15" height="15.6" viewBox="0 0 15 15.6"><g stroke="#d12399" stroke-width="3.1" fill="none" stroke-linecap="round"><path d="M6.500 8C6.100 4.600 5.200 1.700 3.500 1.500 2 1.400 1.300 2.900 1.600 4.300"/><path d="M8.500 8C8.900 4.600 9.800 1.700 11.500 1.500 13 1.400 13.700 2.900 13.400 4.300"/></g><path d="M0 15.600c.800-1.900 2.500-3 4.600-3.100l.600 3.100zM15 15.600c-.800-1.900-2.500-3-4.600-3.100l-.600 3.100z" fill="#a9c7dc"/><path d="M3.300 7.400h8.400c1.100 0 1.800.900 1.800 2.100s-.700 2.100-1.800 2.100h-.900l.700 3.800H3.500l.700-3.800h-.900c-1.100 0-1.800-.900-1.800-2.100s.700-2.100 1.800-2.100z" fill="#d12399"/><rect x="2.900" y="8.500" width="9.200" height="2.100" rx="1.050" fill="#fdeaf6"/><path d="M5.200 15.400l2.300-2 2.300 2z" fill="#181818" opacity=".35"/></svg>
<span class="t" style="top:772.50px;font-size:16.6px;color:#dddddd;left:105.60px;letter-spacing:0.374px;max-width:249px;overflow:hidden;">013_string.mbt</span>
<svg class="b" style="left:79.8px;top:801.7px;" width="15" height="15.6" viewBox="0 0 15 15.6"><g stroke="#d12399" stroke-width="3.1" fill="none" stroke-linecap="round"><path d="M6.500 8C6.100 4.600 5.200 1.700 3.500 1.500 2 1.400 1.300 2.900 1.600 4.300"/><path d="M8.500 8C8.900 4.600 9.800 1.700 11.500 1.500 13 1.400 13.700 2.900 13.400 4.300"/></g><path d="M0 15.600c.800-1.900 2.500-3 4.600-3.100l.600 3.100zM15 15.600c-.800-1.900-2.500-3-4.600-3.100l-.600 3.100z" fill="#a9c7dc"/><path d="M3.300 7.400h8.400c1.100 0 1.800.900 1.800 2.100s-.700 2.100-1.800 2.100h-.900l.700 3.800H3.500l.700-3.800h-.900c-1.100 0-1.800-.900-1.800-2.100s.700-2.100 1.800-2.100z" fill="#d12399"/><rect x="2.900" y="8.500" width="9.200" height="2.100" rx="1.050" fill="#fdeaf6"/><path d="M5.200 15.400l2.300-2 2.300 2z" fill="#181818" opacity=".35"/></svg>
<span class="t" style="top:800.50px;font-size:16.6px;color:#dddddd;left:105.60px;letter-spacing:0.222px;max-width:249px;overflow:hidden;">014_unicode.mbt</span>
<svg class="b" style="left:79.8px;top:829.9px;" width="15" height="15.6" viewBox="0 0 15 15.6"><g stroke="#d12399" stroke-width="3.1" fill="none" stroke-linecap="round"><path d="M6.500 8C6.100 4.600 5.200 1.700 3.500 1.500 2 1.400 1.300 2.900 1.600 4.300"/><path d="M8.500 8C8.900 4.600 9.800 1.700 11.500 1.500 13 1.400 13.700 2.900 13.400 4.300"/></g><path d="M0 15.600c.800-1.900 2.500-3 4.600-3.100l.600 3.100zM15 15.600c-.800-1.900-2.500-3-4.600-3.100l-.600 3.100z" fill="#a9c7dc"/><path d="M3.300 7.400h8.400c1.100 0 1.800.900 1.800 2.100s-.700 2.100-1.800 2.100h-.900l.700 3.800H3.500l.700-3.800h-.900c-1.100 0-1.800-.900-1.800-2.100s.700-2.100 1.800-2.100z" fill="#d12399"/><rect x="2.900" y="8.500" width="9.200" height="2.100" rx="1.050" fill="#fdeaf6"/><path d="M5.200 15.400l2.300-2 2.300 2z" fill="#181818" opacity=".35"/></svg>
<span class="t" style="top:828.50px;font-size:16.6px;color:#dddddd;left:105.60px;letter-spacing:0.155px;max-width:249px;overflow:hidden;">015_hamt.mbt</span>
<svg class="b" style="left:79.8px;top:858.1px;" width="15" height="15.6" viewBox="0 0 15 15.6"><g stroke="#d12399" stroke-width="3.1" fill="none" stroke-linecap="round"><path d="M6.500 8C6.100 4.600 5.200 1.700 3.500 1.500 2 1.400 1.300 2.900 1.600 4.300"/><path d="M8.500 8C8.900 4.600 9.800 1.700 11.500 1.500 13 1.400 13.700 2.900 13.400 4.300"/></g><path d="M0 15.600c.800-1.900 2.500-3 4.600-3.100l.600 3.100zM15 15.600c-.800-1.900-2.500-3-4.600-3.100l-.600 3.100z" fill="#a9c7dc"/><path d="M3.300 7.400h8.400c1.100 0 1.800.900 1.800 2.100s-.700 2.100-1.800 2.100h-.900l.700 3.800H3.500l.700-3.800h-.900c-1.100 0-1.800-.900-1.800-2.100s.700-2.100 1.800-2.100z" fill="#d12399"/><rect x="2.900" y="8.500" width="9.200" height="2.100" rx="1.050" fill="#fdeaf6"/><path d="M5.200 15.400l2.300-2 2.300 2z" fill="#181818" opacity=".35"/></svg>
<span class="t" style="top:857.50px;font-size:16.6px;color:#dddddd;left:105.60px;letter-spacing:0.155px;max-width:249px;overflow:hidden;">016_number.mbt</span>
<svg class="b" style="left:79.8px;top:886.3000000000001px;" width="15" height="15.6" viewBox="0 0 15 15.6"><g stroke="#d12399" stroke-width="3.1" fill="none" stroke-linecap="round"><path d="M6.500 8C6.100 4.600 5.200 1.700 3.500 1.500 2 1.400 1.300 2.900 1.600 4.300"/><path d="M8.500 8C8.900 4.600 9.800 1.700 11.500 1.500 13 1.400 13.700 2.900 13.400 4.300"/></g><path d="M0 15.600c.800-1.900 2.500-3 4.600-3.100l.600 3.100zM15 15.600c-.800-1.900-2.500-3-4.600-3.100l-.600 3.100z" fill="#a9c7dc"/><path d="M3.300 7.400h8.400c1.100 0 1.800.900 1.800 2.100s-.700 2.100-1.800 2.100h-.900l.700 3.800H3.500l.700-3.800h-.900c-1.100 0-1.800-.900-1.800-2.100s.700-2.100 1.800-2.100z" fill="#d12399"/><rect x="2.900" y="8.500" width="9.200" height="2.100" rx="1.050" fill="#fdeaf6"/><path d="M5.200 15.400l2.300-2 2.300 2z" fill="#181818" opacity=".35"/></svg>
<span class="t" style="top:885.50px;font-size:16.6px;color:#dddddd;left:105.60px;letter-spacing:0.295px;max-width:249px;overflow:hidden;">017_vector.mbt</span>
<svg class="b" style="left:79.8px;top:914.5px;" width="15" height="1.8" viewBox="0 0 15 1.8"><g stroke="#d12399" stroke-width="3.1" fill="none" stroke-linecap="round"><path d="M6.500 8C6.100 4.600 5.200 1.700 3.500 1.500 2 1.400 1.300 2.900 1.600 4.300"/><path d="M8.500 8C8.900 4.600 9.800 1.700 11.500 1.500 13 1.400 13.700 2.900 13.400 4.300"/></g><path d="M0 15.600c.800-1.900 2.500-3 4.600-3.100l.600 3.100zM15 15.600c-.800-1.900-2.500-3-4.600-3.100l-.600 3.100z" fill="#a9c7dc"/><path d="M3.300 7.400h8.400c1.100 0 1.800.900 1.800 2.100s-.700 2.100-1.800 2.100h-.900l.700 3.800H3.500l.700-3.800h-.900c-1.100 0-1.800-.900-1.800-2.100s.700-2.100 1.800-2.100z" fill="#d12399"/><rect x="2.900" y="8.500" width="9.200" height="2.100" rx="1.050" fill="#fdeaf6"/><path d="M5.200 15.400l2.300-2 2.300 2z" fill="#181818" opacity=".35"/></svg>
<div class="b" style="left:62px;top:915px;width:298px;height:1px;background:#2b2b2b;"></div>
<div class="b" style="left:62px;top:943.3px;width:298px;height:1px;background:#2b2b2b;"></div>
<svg class="b" style="left:70px;top:922px;" width="9" height="15" viewBox="0 0 9 15"><path d="M1.500 1.600l6 5.900-6 5.900" stroke="#dddddd" stroke-width="1.3" fill="none"/></svg>
<span class="t" style="top:920.00px;font-size:14px;color:#dddddd;left:87.40px;letter-spacing:0.307px;font-weight:700;">OUTLINE</span>
<svg class="b" style="left:70px;top:950.2px;" width="9" height="15" viewBox="0 0 9 15"><path d="M1.500 1.600l6 5.900-6 5.900" stroke="#dddddd" stroke-width="1.3" fill="none"/></svg>
<span class="t" style="top:948.00px;font-size:14px;color:#dddddd;left:87.40px;letter-spacing:0.282px;font-weight:700;">TIMELINE</span>
<svg class="b" style="left:379.4px;top:171.4px;" width="14.4" height="14.6" viewBox="0 0 14.4 14.6"><g stroke="#e2dc3c" stroke-width="1.8" fill="none" stroke-linecap="round" stroke-linejoin="round"><path d="M5 .900C3.300.900 2.900 1.800 2.900 3.200V5.300C2.900 6.600 2.300 7.200.900 7.300 2.300 7.400 2.900 8 2.900 9.300v2.100c0 1.400.400 2.300 2.100 2.300"/><path d="M9.400.900c1.700 0 2.100.900 2.100 2.300v2.100c0 1.300.600 1.900 2 2-1.400.100-2 .700-2 2v2.100c0 1.400-.400 2.300-2.100 2.300"/></g></svg>
<span class="t" style="top:169.50px;font-size:16.6px;color:#ffffff;left:402.50px;letter-spacing:0.482px;font-style:italic;">moon.pkg.json</span>
<svg class="b" style="left:527px;top:172px;" width="14" height="14" viewBox="0 0 14 14"><path d="M1.800 1.800l10.400 10.400M12.200 1.800L1.800 12.200" stroke="#e0e0e0" stroke-width="1.3" fill="none"/></svg>
<svg class="b" style="left:1078px;top:169px;" width="16" height="20" viewBox="0 0 16 20"><path d="M2 2.200v15.600l11.600-7.800z" stroke="#d4d4d4" stroke-width="1.3" fill="none" stroke-linejoin="round"/></svg>
<svg class="b" style="left:1100.6px;top:175px;" width="12" height="8" viewBox="0 0 12 8"><path d="M1.200 1.200l4.800 4.800 4.800-4.800" stroke="#d4d4d4" stroke-width="1.200" fill="none"/></svg>
<svg class="b" style="left:1127px;top:169px;" width="19" height="19" viewBox="0 0 19 19"><rect x="1.300" y="1.300" width="16.400" height="15.800" rx="1.800" stroke="#d4d4d4" stroke-width="1.400" fill="none"/><path d="M9.500 1.300v15.800" stroke="#d4d4d4" stroke-width="1.400"/></svg>
<div class="b" style="left:1161.5px;top:177.2px;width:2.4px;height:2.4px;background:#d4d4d4;border-radius:50%;"></div>
<div class="b" style="left:1168.0px;top:177.2px;width:2.4px;height:2.4px;background:#d4d4d4;border-radius:50%;"></div>
<div class="b" style="left:1174.5px;top:177.2px;width:2.4px;height:2.4px;background:#d4d4d4;border-radius:50%;"></div>
<span class="t" style="top:206.50px;font-size:16.6px;color:#b0b0b0;left:382.50px;letter-spacing:0.341px;">020_regex_derivative</span>
<svg class="b" style="left:555px;top:209px;" width="9" height="15" viewBox="0 0 9 15"><path d="M1.500 1.600l6 5.900-6 5.900" stroke="#b0b0b0" stroke-width="1.300" fill="none"/></svg>
<svg class="b" style="left:575.3px;top:208px;" width="14.4" height="14.6" viewBox="0 0 14.4 14.6"><g stroke="#e2dc3c" stroke-width="1.8" fill="none" stroke-linecap="round" stroke-linejoin="round"><path d="M5 .900C3.300.900 2.900 1.800 2.900 3.200V5.300C2.900 6.600 2.300 7.200.900 7.300 2.300 7.400 2.900 8 2.900 9.300v2.100c0 1.400.400 2.300 2.100 2.300"/><path d="M9.400.900c1.700 0 2.100.900 2.100 2.300v2.100c0 1.300.600 1.900 2 2-1.400.100-2 .700-2 2v2.100c0 1.400-.400 2.300-2.100 2.300"/></g></svg>
<span class="t" style="top:206.50px;font-size:16.6px;color:#b0b0b0;left:598.00px;letter-spacing:0.389px;">moon.pkg.json</span>
<svg class="b" style="left:719px;top:209px;" width="9" height="15" viewBox="0 0 9 15"><path d="M1.500 1.600l6 5.900-6 5.900" stroke="#b0b0b0" stroke-width="1.300" fill="none"/></svg>
<span class="t" style="top:206.50px;font-size:16.6px;color:#b0b0b0;left:733.00px;letter-spacing:-0.281px;">...</span>
<div class="b" style="left:446px;top:229.2px;width:760px;height:23.4px;box-sizing:border-box;border:2.500px solid #292929;"></div>
<div class="b" style="left:1180.8px;top:229.2px;width:1.3px;height:742.6px;background:#111214;"></div>
<span class="t" style="top:231.00px;font-size:15.38px;color:#cccccc;left:404.00px;font-family:'DejaVu Sans Mono','Liberation Mono',monospace;">1</span>
<span class="t" style="top:231.00px;font-size:15.38px;color:#ffd700;left:446.40px;font-family:'DejaVu Sans Mono','Liberation Mono',monospace;">{</span>
<span class="t" style="top:254.00px;font-size:15.38px;color:#6e7681;left:404.00px;font-family:'DejaVu Sans Mono','Liberation Mono',monospace;">2</span>
<div class="b" style="left:446px;top:252.5px;width:1.2px;height:23px;background:#404040;"></div>
<span class="t" style="left:464.2px;top:254.00px;font-size:15.38px;font-family:'DejaVu Sans Mono','Liberation Mono',monospace;color:#cccccc"><span style="color:#9cdcfe">"is_main"</span>: <span style="color:#569cd6">true</span>,</span>
<div class="b" style="left:188.5px;top:266.6px;width:398.5px;height:609.1999999999999px;background:#1f1f1f;box-sizing:border-box;border:1.3px solid #454545;border-radius:6.5px;box-shadow:0 2px 10px rgba(0,0,0,0.4);"></div>
<span class="t" style="top:279.50px;font-size:16.6px;color:#e0e0e0;left:228.40px;letter-spacing:0.341px;">Open to the Side</span>
<span class="t" style="right:651.60px;top:279.50px;font-size:16.6px;color:#e0e0e0"><span style="display:inline-block;width:12.9px;height:1px;position:relative"><span style="position:absolute;left:0.2px;top:-15.1px;font-size:22px;line-height:22px;transform:scaleX(1.2);transform-origin:0 0;-webkit-text-stroke:0;letter-spacing:0">^</span></span><span style="letter-spacing:0.1px;margin-right:-0.1px">Enter</span></span>
<span class="t" style="top:312.50px;font-size:16.6px;color:#e0e0e0;left:228.40px;letter-spacing:0.305px;">Open With...</span>
<div class="b" style="left:189.8px;top:344.9599999999999px;width:395.9px;height:1.3px;background:#454545;"></div>
<span class="t" style="top:360.50px;font-size:16.6px;color:#e0e0e0;left:228.40px;letter-spacing:0.391px;">Select for Compare</span>
<div class="b" style="left:189.8px;top:392.38999999999993px;width:395.9px;height:1.3px;background:#454545;"></div>
<span class="t" style="top:407.50px;font-size:16.6px;color:#e0e0e0;left:228.40px;letter-spacing:0.346px;">Open Timeline</span>
<div class="b" style="left:189.8px;top:439.81999999999994px;width:395.9px;height:1.3px;background:#454545;"></div>
<span class="t" style="top:455.50px;font-size:16.6px;color:#e0e0e0;left:228.40px;letter-spacing:0.324px;">Cut</span>
<span class="t" style="right:651.60px;top:455.50px;font-size:16.6px;color:#e0e0e0"><span class="sym" style="width:14.7px">⌘</span><span style="letter-spacing:0px;margin-right:0px">X</span></span>
<span class="t" style="top:488.50px;font-size:16.6px;color:#e0e0e0;left:228.40px;letter-spacing:0.238px;">Copy</span>
<span class="t" style="right:651.60px;top:488.50px;font-size:16.6px;color:#e0e0e0"><span class="sym" style="width:14.7px">⌘</span><span style="letter-spacing:0px;margin-right:0px">C</span></span>
<div class="b" style="left:189.8px;top:520.5799999999999px;width:395.9px;height:1.3px;background:#454545;"></div>
<span class="t" style="top:535.50px;font-size:16.6px;color:#e0e0e0;left:228.40px;letter-spacing:0.314px;">Download...</span>
<div class="b" style="left:189.8px;top:568.01px;width:395.9px;height:1.3px;background:#454545;"></div>
<span class="t" style="top:583.50px;font-size:16.6px;color:#e0e0e0;left:228.40px;letter-spacing:0.168px;">Copy Path</span>
<span class="t" style="right:651.60px;top:583.50px;font-size:16.6px;color:#e0e0e0"><span class="sym" style="width:16px">⌥</span><span class="sym" style="width:14.7px">⌘</span><span style="letter-spacing:0px;margin-right:0px">C</span></span>
<span class="t" style="top:616.50px;font-size:16.6px;color:#e0e0e0;left:228.40px;letter-spacing:0.170px;">Copy Relative Path</span>
<span class="t" style="right:651.60px;top:616.50px;font-size:16.6px;color:#e0e0e0"><span class="sym" style="width:17px;transform:scaleX(1.3)">⇧</span><span class="sym" style="width:16px">⌥</span><span class="sym" style="width:14.7px">⌘</span><span style="letter-spacing:0px;margin-right:0px">C</span></span>
<div class="b" style="left:189.8px;top:648.7700000000001px;width:395.9px;height:1.3px;background:#454545;"></div>
<span class="t" style="top:664.50px;font-size:16.6px;color:#e0e0e0;left:228.40px;letter-spacing:-0.018px;">Rename...</span>
<span class="t" style="right:651.60px;top:664.50px;font-size:16.6px;color:#e0e0e0"><span style="letter-spacing:0.1px;margin-right:-0.1px">Enter</span></span>
<span class="t" style="top:697.50px;font-size:16.6px;color:#e0e0e0;left:228.40px;letter-spacing:0.331px;">Delete Permanently</span>
<span class="t" style="right:651.60px;top:697.50px;font-size:16.6px;color:#e0e0e0"><span class="sym" style="width:14.7px">⌘</span><span style="letter-spacing:0.35px;margin-right:-0.35px">Backspace</span></span>
<div class="b" style="left:189.8px;top:729.5300000000002px;width:395.9px;height:1.3px;background:#454545;"></div>
<span class="t" style="top:744.50px;font-size:16.6px;color:#e0e0e0;left:228.40px;letter-spacing:0.325px;">Compile to Wasm</span>
<span class="t" style="top:778.50px;font-size:16.6px;color:#e0e0e0;left:228.40px;letter-spacing:0.363px;">Compile to Wat</span>
<span class="t" style="right:651.60px;top:778.50px;font-size:16.6px;color:#e0e0e0"><span style="letter-spacing:0px;margin-right:0px">F7</span></span>
<span class="t" style="top:811.50px;font-size:16.6px;color:#e0e0e0;left:228.40px;letter-spacing:-0.351px;">Run</span>
<span class="t" style="right:651.60px;top:811.50px;font-size:16.6px;color:#e0e0e0"><span style="letter-spacing:0px;margin-right:0px">F5</span></span>
<div class="b" style="left:194.7px;top:837.2200000000004px;width:385.6px;height:33.73px;background:#06355b;border-radius:5px;"></div>
<span class="t" style="top:844.50px;font-size:16.6px;color:#ffffff;left:228.40px;letter-spacing:0.447px;">Debug (in devtools)</span>
<div class="b" style="left:209.4px;top:833.6px;width:202.8px;height:41.4px;box-sizing:border-box;border:3.7px solid #ff2d12;border-radius:7px;"></div>
</div></body></html>
